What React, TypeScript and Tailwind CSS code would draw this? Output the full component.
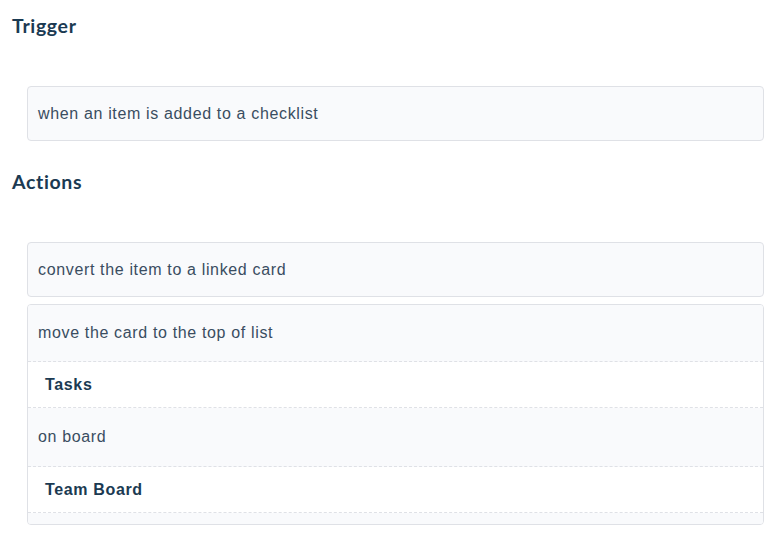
import React from 'react';

function Heading({ children }: { children: React.ReactNode }) {
  return (
    <h3 className="text-[19.5px] leading-[24px] font-bold text-[#1b3a52]" style={{ fontFamily: 'Lato, "Open Sans", sans-serif' }}>
      {children}
    </h3>
  );
}

function Row({ text, bold, tall }: { text: string; bold?: boolean; tall?: boolean }) {
  if (bold) {
    return (
      <div className="h-[46px] flex items-center pl-[17px] bg-white border-b border-dashed border-[#dfe1e6] font-bold text-[#1b3a52]">
        {text}
      </div>
    );
  }
  return (
    <div className={`${tall ? 'h-[59px]' : 'h-[57px]'} flex items-center pl-[10px] bg-[#f9fafc] border-b border-dashed border-[#dfe1e6] text-[#3a4d61]`}>
      {text}
    </div>
  );
}

export default function App() {
  return (
    <div
      className="w-[782px] h-[543px] bg-white pl-[12px] pt-[14px] text-[16px] tracking-[0.65px]"
      style={{ fontFamily: '"Liberation Sans", Arial, sans-serif' }}
    >
      <Heading>Trigger</Heading>
      <div className="ml-[15px] w-[737px] mt-[48px] h-[55px] flex items-center pl-[10px] bg-[#f9fafc] border border-[#dfe1e6] rounded-[4px] text-[#3a4d61]">
        when an item is added to a checklist
      </div>

      <div className="mt-[29px]">
        <Heading>Actions</Heading>
      </div>
      <div className="ml-[15px] w-[737px] mt-[48px] flex flex-col gap-[7px]">
        <div className="h-[55px] flex items-center pl-[10px] bg-[#f9fafc] border border-[#dfe1e6] rounded-[4px] text-[#3a4d61]">
          convert the item to a linked card
        </div>
        <div className="border border-[#dfe1e6] rounded-[4px] overflow-hidden bg-[#f9fafc]">
          <Row text="move the card to the top of list" />
          <Row text="Tasks" bold />
          <Row text="on board" tall />
          <Row text="Team Board" bold />
          <div className="h-[11px] bg-[#f9fafc]" />
        </div>
      </div>
    </div>
  );
}
